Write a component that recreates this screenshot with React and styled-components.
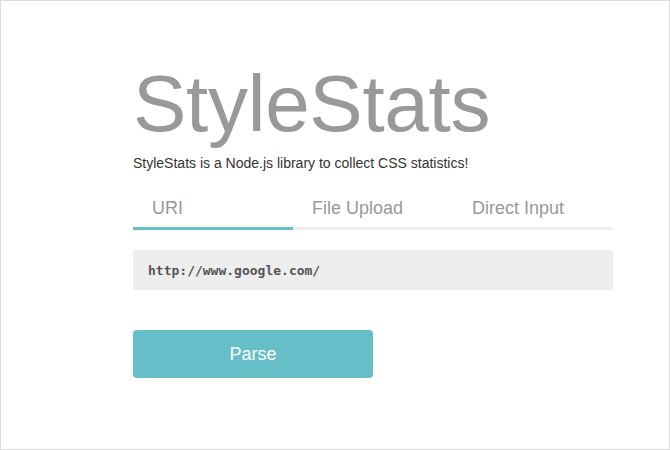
import React, { useState } from 'react'
import styled, { createGlobalStyle } from 'styled-components'

const GlobalStyle = createGlobalStyle`
  * { box-sizing: border-box; }
  html, body { margin: 0; padding: 0; background: #fff; }
  body { font-family: "Liberation Sans", Arial, sans-serif; }
`

const Frame = styled.div`
  width: 670px;
  height: 450px;
  border: 1px solid #dddddd;
  padding: 63px 0 0 132px;
  overflow: hidden;
`

const Main = styled.main`
  width: 480px;
  display: flex;
  flex-direction: column;
`

const Title = styled.h1`
  margin: 0;
  font-size: 80px;
  line-height: 80px;
  font-weight: 400;
  color: #999999;
  letter-spacing: -0.3px;
`

const Lead = styled.p`
  margin: 11px 0 0;
  font-size: 14px;
  line-height: 16px;
  color: #333333;
`

const Tabs = styled.ul`
  list-style: none;
  margin: 17px 0 0;
  padding: 0;
  display: flex;
`

const Tab = styled.li`
  flex: 1;
  padding: 10px 0 9px 19px;
  font-size: 18px;
  line-height: 20px;
  color: #999999;
  border-bottom: 3px solid ${p => (p.$active ? '#66bec8' : '#eeeeee')};
  cursor: pointer;
`

const UrlField = styled.input`
  margin-top: 20px;
  width: 100%;
  height: 40px;
  border: none;
  outline: none;
  border-radius: 3px;
  background: #eeeeee;
  padding: 1px 15px 0;
  font-family: "DejaVu Sans Mono", "Liberation Mono", monospace;
  font-weight: 700;
  font-size: 13px;
  color: #555555;
`

const ParseButton = styled.button`
  margin-top: 40px;
  width: 240px;
  height: 48px;
  border: none;
  border-radius: 4px;
  background: #66bec8;
  color: #ffffff;
  font-family: "Liberation Sans", Arial, sans-serif;
  font-size: 18px;
  cursor: pointer;
`

const tabs = ['URI', 'File Upload', 'Direct Input']

export default function App() {
  const [active, setActive] = useState(0)
  const [url, setUrl] = useState('http://www.google.com/')

  return (
    <>
      <GlobalStyle />
      <Frame>
        <Main>
          <Title>StyleStats</Title>
          <Lead>StyleStats is a Node.js library to collect CSS statistics!</Lead>
          <Tabs>
            {tabs.map((t, i) => (
              <Tab key={t} $active={i === active} onClick={() => setActive(i)}>{t}</Tab>
            ))}
          </Tabs>
          <UrlField value={url} onChange={e => setUrl(e.target.value)} />
          <ParseButton>Parse</ParseButton>
        </Main>
      </Frame>
    </>
  )
}
